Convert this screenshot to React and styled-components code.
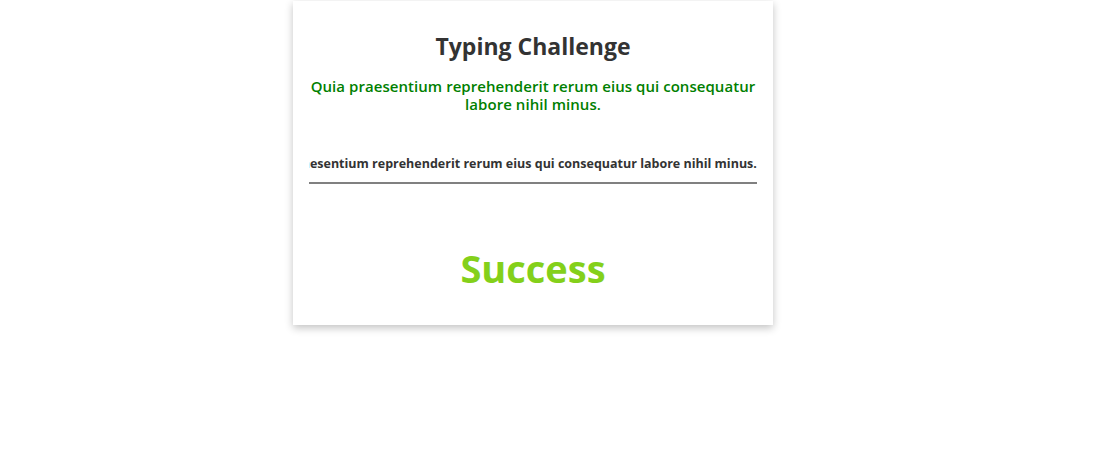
import React, { useEffect, useRef } from "react";
import styled, { createGlobalStyle } from "styled-components";

const SENTENCE =
  "Quia praesentium reprehenderit rerum eius qui consequatur labore nihil minus.";

const GlobalStyle = createGlobalStyle`
  html, body {
    margin: 0;
    background: #fff;
    font-family: "Open Sans", "Noto Sans", sans-serif;
  }
`;

const Page = styled.div`
  display: flex;
  justify-content: flex-start;
  min-height: 449px;
  box-sizing: border-box;
  padding: 1px 0 40px 293px;
  align-items: flex-start;
`;

const Card = styled.div`
  width: 480px;
  box-sizing: border-box;
  padding: 16px 16px 35px;
  background: #fff;
  box-shadow: 0 3px 8px rgba(0, 0, 0, 0.24);
  text-align: center;
`;

const Title = styled.h2`
  margin: 12px 0 14px;
  font-size: 23px;
  font-weight: 700;
  color: #333;
  line-height: 34px;
`;

const Sentence = styled.p`
  margin: 0;
  font-size: 15px;
  line-height: 18px;
  font-weight: 600;
  letter-spacing: 0.05px;
  color: #008000;
`;

const Field = styled.input`
  display: block;
  width: 100%;
  box-sizing: border-box;
  margin-top: 36px;
  padding: 6px 0 10px;
  border: none;
  border-bottom: 2px solid #808080;
  outline: none;
  font-family: inherit;
  font-size: 12.5px;
  font-weight: 700;
  color: #333;
  caret-color: #222;
`;

const Result = styled.div`
  margin-top: 62px;
  font-size: 38px;
  font-weight: 700;
  line-height: 44px;
  color: ${({ ok }) => (ok ? "#84d01a" : "#d0021b")};
`;

export default function App() {
  const inputRef = useRef(null);

  useEffect(() => {
    const el = inputRef.current;
    if (!el) return;
    el.focus();
    el.setSelectionRange(SENTENCE.length, SENTENCE.length);
    el.scrollLeft = el.scrollWidth;
  }, []);

  return (
    <>
      <GlobalStyle />
      <Page>
        <Card>
          <Title>Typing Challenge</Title>
          <Sentence>{SENTENCE}</Sentence>
          <Field ref={inputRef} defaultValue={SENTENCE} />
          <Result ok>Success</Result>
        </Card>
      </Page>
    </>
  );
}
